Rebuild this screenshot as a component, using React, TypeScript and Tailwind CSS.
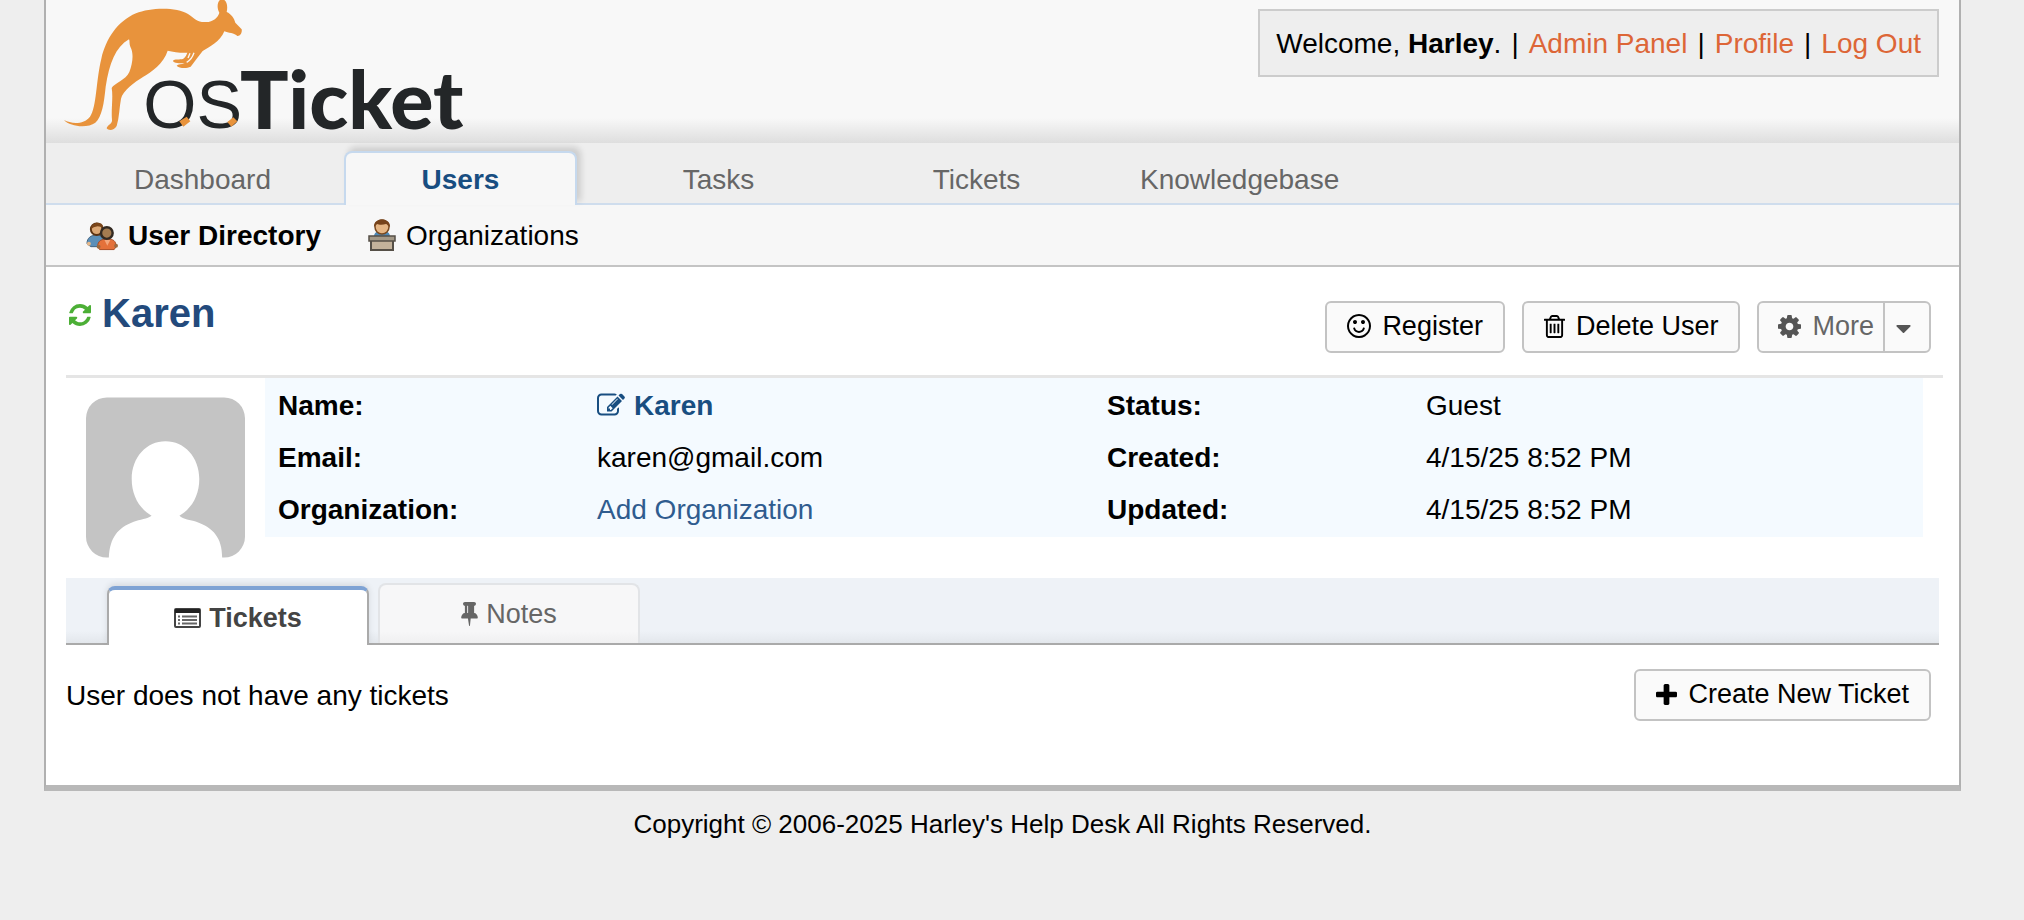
import type { ReactNode } from "react";

const PATHS = {
  refresh:
    "M1639 1056q0 5-1 7-64 268-268 434.5t-478 166.5q-146 0-282.5-55t-243.5-157l-129 129q-19 19-45 19t-45-19-19-45v-448q0-26 19-45t45-19h448q26 0 45 19t19 45-19 45l-137 137q71 66 161 102t187 36q134 0 250-65t186-179q11-17 53-117 8-23 30-23h192q13 0 22.5 9.5t9.5 22.5zm25-800v448q0 26-19 45t-45 19h-448q-26 0-45-19t-19-45 19-45l138-138q-148-137-349-137-134 0-250 65t-186 179q-11 17-53 117-8 23-30 23h-199q-13 0-22.5-9.5t-9.5-22.5v-7q65-268 270-434.5t480-166.5q146 0 284 55.5t245 156.5l130-129q19-19 45-19t45 19 19 45z",
  plus: "M1600 736v192q0 40-28 68t-68 28h-416v416q0 40-28 68t-68 28h-192q-40 0-68-28t-28-68v-416h-416q-40 0-68-28t-28-68v-192q0-40 28-68t68-28h416v-416q0-40 28-68t68-28h192q40 0 68 28t28 68v416h416q40 0 68 28t28 68z",
  caret: "M1408 704q0 26-19 45l-448 448q-19 19-45 19t-45-19l-448-448q-19-19-19-45t19-45 45-19h896q26 0 45 19t19 45z",
  cog: "M1152 896q0-106-75-181t-181-75-181 75-75 181 75 181 181 75 181-75 75-181zm512-109v222q0 12-8 23t-20 13l-185 28q-19 54-39 91 35 50 107 138 10 12 10 25t-9 23q-27 37-99 108t-94 71q-12 0-26-9l-138-108q-44 23-91 38-16 136-29 186-7 28-36 28h-222q-14 0-24.5-8.5t-11.5-21.5l-28-184q-49-16-90-37l-141 107q-10 9-25 9-14 0-25-11-126-114-165-168-7-10-7-23 0-12 8-23 15-21 51-66.5t54-70.5q-27-50-41-99l-183-27q-13-2-21-12.5t-8-23.5v-222q0-12 8-23t19-13l186-28q14-46 39-92-40-57-107-138-10-12-10-24 0-10 9-23 26-36 98.5-107.5t94.5-71.5q13 0 26 10l138 107q44-23 91-38 16-136 29-186 7-28 36-28h222q14 0 24.5 8.5t11.5 21.5l28 184q49 16 90 37l142-107q9-9 24-9 13 0 25 10 129 119 165 170 7 8 7 22 0 12-8 23-15 21-51 66.5t-54 70.5q26 50 41 98l183 28q13 2 21 12.5t8 23.5z",
  trash:
    "M704 736v576q0 14-9 23t-23 9h-64q-14 0-23-9t-9-23v-576q0-14 9-23t23-9h64q14 0 23 9t9 23zm256 0v576q0 14-9 23t-23 9h-64q-14 0-23-9t-9-23v-576q0-14 9-23t23-9h64q14 0 23 9t9 23zm256 0v576q0 14-9 23t-23 9h-64q-14 0-23-9t-9-23v-576q0-14 9-23t23-9h64q14 0 23 9t9 23zm128 724v-948h-896v948q0 22 7 40.5t14.5 27 10.5 8.5h832q3 0 10.5-8.5t14.5-27 7-40.5zm-672-1076h448l-48-117q-7-9-17-11h-317q-10 2-17 11zm928 32v64q0 14-9 23t-23 9h-96v948q0 83-47 143.5t-113 60.5h-832q-66 0-113-58.5t-47-141.5v-952h-96q-14 0-23-9t-9-23v-64q0-14 9-23t23-9h309l70-167q15-37 54-63t79-26h320q40 0 79 26t54 63l70 167h309q14 0 23 9t9 23z",
  smile:
    "M1262 1075q-37 121-138 195t-228 74-228-74-138-195q-8-25 4-48.5t38-31.5q25-8 48.5 4t31.5 38q25 80 92.5 129.5t151.5 49.5 151.5-49.5 92.5-129.5q8-26 32-38t49-4 37 31.5 4 48.5zm-494-435q0 53-37.5 90.5t-90.5 37.5-90.5-37.5-37.5-90.5 37.5-90.5 90.5-37.5 90.5 37.5 37.5 90.5zm512 0q0 53-37.5 90.5t-90.5 37.5-90.5-37.5-37.5-90.5 37.5-90.5 90.5-37.5 90.5 37.5 37.5 90.5zm256 256q0-130-51-248.5t-136.5-204-204-136.5-248.5-51-248.5 51-204 136.5-136.5 204-51 248.5 51 248.5 136.5 204 204 136.5 248.5 51 248.5-51 204-136.5 136.5-204 51-248.5zm128 0q0 209-103 385.5t-279.5 279.5-385.5 103-385.5-103-279.5-279.5-103-385.5 103-385.5 279.5-279.5 385.5-103 385.5 103 279.5 279.5 103 385.5z",
  edit: "M888 1184l116-116-152-152-116 116v56h96v96h56zm440-720q-16-16-33 1l-350 350q-17 17-1 33t33-1l350-350q17-17 1-33zm80 594v190q0 119-84.5 203.5t-203.5 84.5h-832q-119 0-203.5-84.5t-84.5-203.5v-832q0-119 84.5-203.5t203.5-84.5h832q63 0 117 25 15 7 18 23 3 17-9 29l-49 49q-14 14-32 8-23-6-45-6h-832q-66 0-113 47t-47 113v832q0 66 47 113t113 47h832q66 0 113-47t47-113v-126q0-13 9-22l64-64q15-15 35-7t20 29zm-96-738l288 288-672 672h-288v-288zm444 132l-92 92-288-288 92-92q28-28 68-28t68 28l152 152q28 28 28 68t-28 68z",
  pin: "M800 864v-448q0-14-9-23t-23-9-23 9-9 23v448q0 14 9 23t23 9 23-9 9-23zm672 352q0 26-19 45t-45 19h-429l-51 483q-2 12-10.5 20.5t-20.5 8.5h-1q-27 0-32-27l-76-485h-404q-26 0-45-19t-19-45q0-123 78.5-221.5t177.5-98.5v-512q-52 0-90-38t-38-90 38-90 90-38h640q52 0 90 38t38 90-38 90-90 38v512q99 0 177.5 98.5t78.5 221.5z",
};

function Glyph({ name, box, className }: { name: keyof typeof PATHS; box: string; className: string }) {
  return (
    <svg viewBox={box} className={"shrink-0 fill-current " + className} aria-hidden="true">
      <path d={PATHS[name]} />
    </svg>
  );
}

function ListIcon() {
  return (
    <svg viewBox="0 0 27 20" className="h-[20px] w-[27px] shrink-0" aria-hidden="true">
      <rect x="1" y="1" width="25" height="18" rx="1" fill="none" stroke="#444" strokeWidth="2" />
      <rect x="1" y="1" width="25" height="4" fill="#222" />
      <path d="M4 8.500h2M4 12h2M4 15.500h2M8 8.500h15M8 12h15M8 15.500h15" stroke="#666" strokeWidth="2" />
    </svg>
  );
}

function Logo() {
  return (
    <svg viewBox="0 0 1230 480" className="-mb-5 h-[160px] w-[410px]" role="img" aria-label="osTicket">
      <path
        fill="#e8933c"
        d="M12 360C34 372 72 374 90 350C110 322 108 240 124 176C138 116 172 64 228 40C270 22 350 20 384 42C404 56 414 68 438 66C460 66 474 52 478 38C468 20 474 0 484 -2C498 -4 505 14 500 36C514 42 523 56 526 68L545 88C547 97 541 109 532 108C524 99 504 99 493 94C482 124 446 142 428 153C416 168 404 184 392 200C378 207 356 204 350 197C354 192 364 194 374 190C360 190 340 190 339 182C342 176 360 180 370 176C376 172 380 164 382 158C362 159 340 156 323 152C312 190 272 218 250 230C224 246 188 272 183 296C178 322 178 352 170 378C162 392 146 393 140 385C142 374 157 372 156 360C153 330 160 290 155 264C162 250 198 240 208 216C218 190 222 160 211 140C207 132 210 124 207 118C166 142 148 190 137 260C132 310 126 350 106 368C82 386 30 380 12 360Z"
      />
      <path d="M402 158C398 170 392 180 380 187M390 160L384 174" stroke="#f8f8f8" strokeWidth="4" fill="none" />
      <text x="250" y="384" fontSize="205" fill="#232628" fontFamily="'Liberation Sans', Arial, sans-serif">
        OS
      </text>
      <text x="540" y="386" fontSize="242" fontWeight="900" fill="#232628" fontFamily="Lato, sans-serif">
        Ticket
      </text>
      <path d="M358 364L380 350L391 364L370 380Z" fill="#e8933c" />
      <path d="M502 366L520 352L532 364L514 380Z" fill="#e8933c" />
    </svg>
  );
}

function PeopleIcon() {
  return (
    <svg viewBox="0 0 33 30" className="h-[30px] w-[32px] shrink-0" aria-hidden="true">
      <path d="M1 23c0-6 4-9 10-9s8 3 8 9l-3 3H5z" fill="#5b8fb8" stroke="#41617d" />
      <circle cx="3" cy="23" r="2" fill="#e8b98a" />
      <circle cx="11" cy="8" r="6" fill="#dba774" stroke="#5b3313" strokeWidth="2" />
      <path d="M5 8c0-8 12-9 13-2l-6-1-4 1z" fill="#7a4519" />
      <path d="M12 26c0-6 4-8 10-8s9 2 9 8l-2 3H14z" fill="#e4713a" stroke="#a84a22" />
      <path d="M19 19l3 6 3-6z" fill="#f3a77c" />
      <circle cx="13" cy="26" r="2" fill="#9a6a40" />
      <circle cx="31" cy="25" r="2" fill="#9a6a40" />
      <circle cx="21.500" cy="12" r="6" fill="#a37b50" stroke="#332a22" strokeWidth="2.500" />
    </svg>
  );
}

function DeskIcon() {
  return (
    <svg viewBox="0 0 28 33" className="-mt-1 h-[33px] w-[28px] shrink-0" aria-hidden="true">
      <path d="M6 19c0-5 3-6 8-6s8 1 8 6z" fill="#4d88b5" />
      <circle cx="14" cy="9" r="7" fill="#e6b684" stroke="#7a4a20" strokeWidth="1.500" />
      <path d="M6 9C5-1 23-1 22 9c-2-1-3-3-4-3-3 1-7 1-9 0z" fill="#77431a" />
      <rect x="3" y="21" width="22" height="11" fill="#c3b29b" stroke="#554f47" strokeWidth="2" />
      <rect x="1" y="18" width="26" height="5" fill="#a39886" stroke="#554f47" strokeWidth="1.500" />
    </svg>
  );
}

function Avatar() {
  return (
    <svg viewBox="0 0 160 161" className="mt-[19px] ml-5 h-[161px] w-[159px] shrink-0" role="img" aria-label="Avatar">
      <path
        fill="#c4c4c4"
        d="M21 0H139A21 21 0 0 1 160 21V140A21 21 0 0 1 139 161H137C137 141 128 131 111 125C105 123 98 123 94 119C106 112 114 99 114 82C114 60 99 44 80 44C61 44 46 60 46 82C46 99 54 112 66 119C62 122 54 123 48 125C32 131 24 141 23 161H21A21 21 0 0 1 0 140V21A21 21 0 0 1 21 0Z"
      />
    </svg>
  );
}

function ActionButton({ children }: { children: ReactNode }) {
  return (
    <button
      type="button"
      className="flex items-center gap-[11px] rounded-md border-2 border-[#c3c3c3] bg-[#fafafa] px-5 pt-[5px] pb-[7px] text-[27px] leading-[36px] whitespace-nowrap"
    >
      {children}
    </button>
  );
}

function NavTab({ label, active }: { label: string; active?: boolean }) {
  return (
    <a
      href="#"
      aria-current={active ? "page" : undefined}
      className={
        "-mb-[2px] min-w-[233px] rounded-t-lg border-x-2 border-t-2 px-5 pt-[9px] pb-[7px] text-center " +
        (active
          ? "border-[#c6d9ee] bg-[#f7f7f7] font-bold text-[#184e81] shadow-[4px_-4px_6px_rgba(0,0,0,0.14)]"
          : "border-transparent text-[#666]")
      }
    >
      {label}
    </a>
  );
}

const Bar = () => <span className="px-[10px]">|</span>;

const LABEL = "px-[13px] py-2 text-left font-bold";
const VALUE = "px-[13px] py-2";

export default function App() {
  return (
    <div className="min-h-screen bg-[#eee] font-['Liberation_Sans',Arial,sans-serif] text-[28px] leading-[36px] text-black">
      <div className="mr-[63px] ml-[44px] border-x-2 border-b-6 border-x-[#b0b0b0] border-b-[#b8b8b8] bg-white">
        <header className="flex items-start justify-between bg-[#f8f8f8] bg-[linear-gradient(to_top,#dedede,#f8f8f8_25px)] pr-5 pb-[3px] pl-[14px]">
          <a href="#">
            <Logo />
          </a>
          <div className="mt-[9px] border-2 border-[#ccc] bg-[#eee] px-4 pt-[15px] pb-[13px]">
            Welcome, <b>Harley</b>.<Bar />
            <a href="#" className="text-[#dd6637]">Admin Panel</a>
            <Bar />
            <a href="#" className="text-[#dd6637]">Profile</a>
            <Bar />
            <a href="#" className="text-[#dd6637]">Log Out</a>
          </div>
        </header>

        <nav className="flex gap-[25px] border-b-2 border-[#cfdded] bg-[#eee] pt-2 pl-[40px]">
          <NavTab label="Dashboard" />
          <NavTab label="Users" active />
          <NavTab label="Tasks" />
          <NavTab label="Tickets" />
          <NavTab label="Knowledgebase" />
        </nav>

        <nav className="flex gap-[47px] border-b-2 border-[#c4c4c4] bg-[#f7f7f7] pt-[13px] pb-[11px] pl-[40px]">
          <a href="#" className="flex items-center gap-[10px] font-bold">
            <PeopleIcon />
            User Directory
          </a>
          <a href="#" className="flex items-center gap-[10px]">
            <DeskIcon />
            Organizations
          </a>
        </nav>

        <main className="px-5 pb-16">
          <div className="-mr-1 flex items-start justify-between border-b-3 border-[#e5e5e5] pr-3 pb-[22px]">
            <h1 className="mt-[22px] text-[40px] leading-[48px] font-bold text-[#234a7c]">
              <a href="#" className="flex items-center gap-[11px]">
                <Glyph
                  name="refresh"
                  box="128 128 1536 1536"
                  className="mt-1 ml-[3px] h-[22px] w-[22px] text-[#4caf36]"
                />
                Karen
              </a>
            </h1>
            <div className="mt-[34px] flex gap-[17px]">
              <ActionButton>
                <Glyph name="smile" box="128 128 1536 1536" className="h-[24px] w-[24px]" />
                Register
              </ActionButton>
              <ActionButton>
                <Glyph name="trash" box="192 128 1408 1536" className="h-[23px] w-[21px]" />
                Delete User
              </ActionButton>
              <button
                type="button"
                className="flex rounded-md border-2 border-[#c3c3c3] bg-[#fafafa] text-[27px] leading-[36px] text-[#666]"
              >
                <span className="flex items-center gap-[11px] border-r-2 border-[#c3c3c3] pt-[5px] pr-[9px] pb-[7px] pl-[19px]">
                  <Glyph name="cog" box="128 128 1536 1536" className="h-[23px] w-[23px] text-[#555]" />
                  More
                </span>
                <span className="flex items-center self-stretch pt-1 pr-[18px] pl-[11px] text-[#555]">
                  <Glyph name="caret" box="384 640 1024 576" className="h-[8px] w-[15px]" />
                </span>
              </button>
            </div>
          </div>

          <div className="flex items-start gap-5 pr-4">
            <Avatar />
            <div className="grow bg-[#f4faff] pt-[2px] pb-[1px]">
              <table className="w-full table-fixed">
                <colgroup>
                  <col className="w-[319px]" />
                  <col />
                  <col className="w-[319px]" />
                  <col />
                </colgroup>
                <tbody>
                  <tr>
                    <th scope="row" className={LABEL}>Name:</th>
                    <td className={VALUE}>
                      <a href="#" className="flex items-center gap-[9px] font-bold text-[#184e81]">
                        <Glyph name="edit" box="0 96 1792 1472" className="-mt-1 h-[23px] w-[28px]" />
                        Karen
                      </a>
                    </td>
                    <th scope="row" className={LABEL}>Status:</th>
                    <td className={VALUE}>Guest</td>
                  </tr>
                  <tr>
                    <th scope="row" className={LABEL}>Email:</th>
                    <td className={VALUE}>karen@gmail.com</td>
                    <th scope="row" className={LABEL}>Created:</th>
                    <td className={VALUE}>4/15/25 8:52 PM</td>
                  </tr>
                  <tr>
                    <th scope="row" className={LABEL}>Organization:</th>
                    <td className={VALUE}>
                      <a href="#" className="text-[#2f5c8f]">Add Organization</a>
                    </td>
                    <th scope="row" className={LABEL}>Updated:</th>
                    <td className={VALUE}>4/15/25 8:52 PM</td>
                  </tr>
                </tbody>
              </table>
            </div>
          </div>

          <div
            role="tablist"
            className="mt-5 flex items-end gap-[9px] border-b-2 border-[#aaa] bg-[linear-gradient(to_top,#e3e7ec,#eef2f7_12px)] pt-[5px] pl-[41px] text-[27px]"
          >
            <button
              type="button"
              role="tab"
              aria-selected="true"
              className="-mb-[2px] flex w-[262px] items-center justify-center gap-2 rounded-t-lg border-x-2 border-t-4 border-x-[#aaa] border-t-[#7fa3d4] bg-white pt-[10px] pb-[9px] font-bold text-[#444] shadow-[0_-2px_6px_rgba(0,0,0,0.1)]"
            >
              <ListIcon />
              Tickets
            </button>
            <button
              type="button"
              role="tab"
              aria-selected="false"
              className="flex w-[262px] items-center justify-center gap-2 rounded-t-lg border-x-2 border-t-2 border-[#e2e4e7] bg-[linear-gradient(to_top,#f0f0f1,#f7f7f8_12px)] pt-[11px] pb-[11px] text-[#666]"
            >
              <Glyph name="pin" box="320 128 1152 1664" className="h-[24px] w-[17px]" />
              Notes
            </button>
          </div>

          <div className="relative flex items-start justify-between bg-white pt-6 pr-2">
            <p className="mt-[9px]">User does not have any tickets</p>
            <ActionButton>
              <Glyph name="plus" box="192 128 1408 1408" className="h-[21px] w-[21px]" />
              Create New Ticket
            </ActionButton>
          </div>
        </main>
      </div>
      <footer className="mr-[63px] ml-[44px] pt-[15px] text-center text-[26px]">
        Copyright © 2006-2025 Harley's Help Desk All Rights Reserved.
      </footer>
    </div>
  );
}
